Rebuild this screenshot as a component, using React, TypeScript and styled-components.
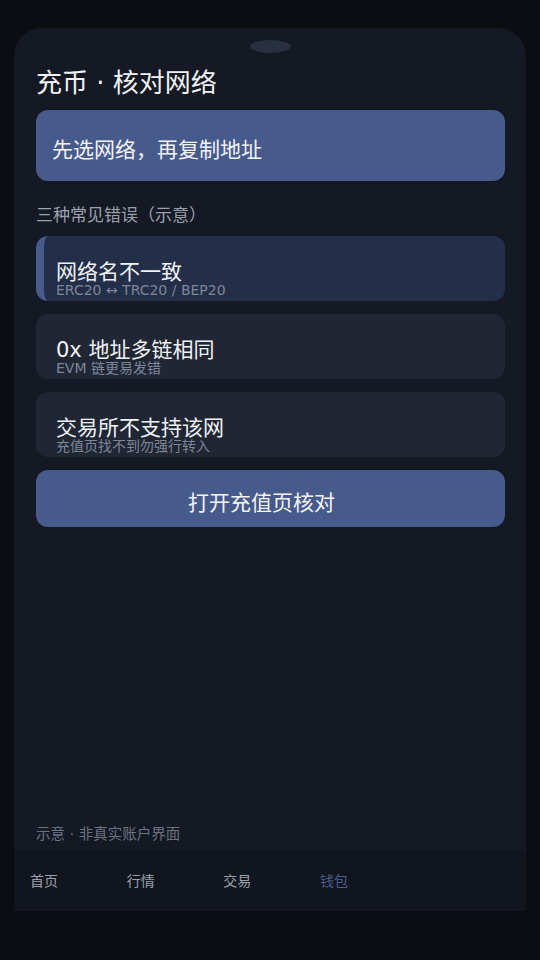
import React from 'react'
import styled, { createGlobalStyle } from 'styled-components'

const GlobalStyle = createGlobalStyle`
  html, body {
    margin: 0;
    padding: 0;
    background: #0b0d12;
  }
  body {
    font-family: 'DejaVu Sans', 'Noto Sans CJK SC', sans-serif;
    color: #eef0f4;
  }
`

interface Mistake {
  title: string
  sub: string
  active?: boolean
}

const mistakes: Mistake[] = [
  { title: '网络名不一致', sub: 'ERC20 ↔ TRC20 / BEP20', active: true },
  { title: '0x 地址多链相同', sub: 'EVM 链更易发错' },
  { title: '交易所不支持该网', sub: '充值页找不到勿强行转入' },
]

const tabs = ['首页', '行情', '交易', '钱包']

const App: React.FC = () => {
  return (
    <>
      <GlobalStyle />
      <Screen>
        <Phone>
          <Notch />
          <Content>
            <Title>充币 · 核对网络</Title>
            <Banner>先选网络，再复制地址</Banner>
            <SectionLabel>三种常见错误（示意）</SectionLabel>
            {mistakes.map((m) => (
              <ErrorCard key={m.title} $active={m.active}>
                <ErrorTitle>{m.title}</ErrorTitle>
                <ErrorSub>{m.sub}</ErrorSub>
              </ErrorCard>
            ))}
            <ActionButton>打开充值页核对</ActionButton>
            <Footnote>示意 · 非真实账户界面</Footnote>
          </Content>
          <TabBar>
            {tabs.map((t) => (
              <Tab key={t} $active={t === '钱包'}>
                {t}
              </Tab>
            ))}
          </TabBar>
        </Phone>
      </Screen>
    </>
  )
}

const Screen = styled.div`
  width: 540px;
  height: 960px;
  box-sizing: border-box;
  padding: 28px 14px 49px;
`

const Phone = styled.div`
  height: 100%;
  background: #151923;
  border-radius: 28px 28px 0 0;
  display: flex;
  flex-direction: column;
  overflow: hidden;
`

const Notch = styled.div`
  width: 41px;
  height: 13px;
  border-radius: 50%;
  background: #283040;
  margin: 12px auto 0;
  flex-shrink: 0;
`

const Content = styled.div`
  flex: 1;
  display: flex;
  flex-direction: column;
  padding: 0 21px 0 22px;
`

const Title = styled.h1`
  margin: 14px 0 0;
  font-size: 26px;
  line-height: 33px;
  font-weight: 400;
  color: #f1f2f5;
`

const Banner = styled.div`
  margin-top: 10px;
  height: 71px;
  box-sizing: border-box;
  padding: 28px 16px 0;
  background: #475a8c;
  border-radius: 12px;
  font-size: 21px;
  line-height: 25px;
  color: #f3f4f8;
`

const SectionLabel = styled.div`
  margin-top: 22px;
  font-size: 17px;
  line-height: 24px;
  color: #9aa1ad;
`

const ErrorCard = styled.div<{ $active?: boolean }>`
  margin-top: ${(p) => (p.$active ? '9px' : '13px')};
  height: 65px;
  box-sizing: border-box;
  padding: 25px 20px 0 ${(p) => (p.$active ? '12px' : '20px')};
  border-radius: 12px;
  background: ${(p) => (p.$active ? '#232e48' : '#212635')};
  border-left: ${(p) => (p.$active ? '8px solid #475a8c' : 'none')};
  overflow: hidden;
`

const ErrorTitle = styled.div`
  font-size: 21px;
  line-height: 23px;
  color: #f1f2f5;
`

const ErrorSub = styled.div`
  font-size: 14px;
  line-height: 13px;
  color: #7d8699;
`

const ActionButton = styled.button`
  margin-top: 13px;
  height: 57px;
  border: none;
  border-radius: 12px;
  background: #475a8c;
  color: #f3f4f8;
  font-family: inherit;
  font-size: 21px;
  padding: 4px 18px 0 0;
  cursor: pointer;
`

const Footnote = styled.div`
  margin-top: auto;
  margin-bottom: 6px;
  font-size: 14.5px;
  line-height: 20px;
  color: #6b7280;
`

const TabBar = styled.nav`
  height: 61px;
  flex-shrink: 0;
  background: #11151d;
  display: grid;
  grid-template-columns: repeat(4, 96.67px);
  align-items: center;
`

const Tab = styled.div<{ $active?: boolean }>`
  padding-left: 16px;
  padding-bottom: 2px;
  font-size: 14px;
  color: ${(p) => (p.$active ? '#4a5d92' : '#9ba1ad')};
`

export default App
